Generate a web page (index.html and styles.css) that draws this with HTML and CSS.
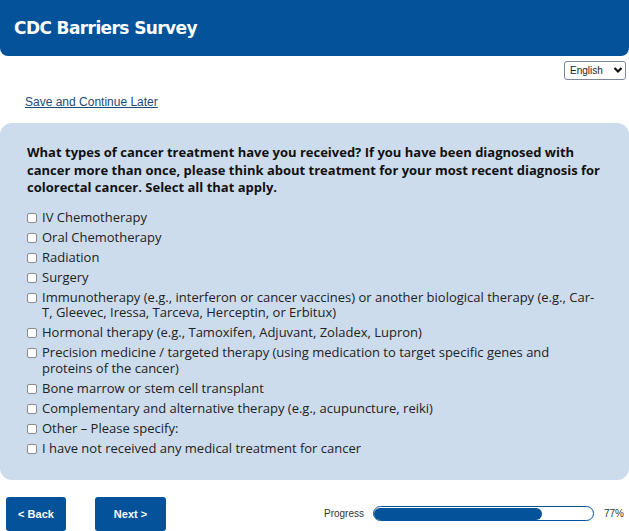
FILE: index.html
```html
<!DOCTYPE html>
<html lang="en">

<head>
    <meta charset="UTF-8">
    <meta name="viewport" content="width=device-width, initial-scale=1.0">
    <title>CDC Barriers Survey</title>
    <link rel="stylesheet" href="styles.css">
</head>

<body>

    <header class="top-bar">
        <h1>CDC Barriers Survey</h1>
    </header>

    <div class="lang-row">
        <div class="lang-select">
            <select>
                <option>English</option>
                <option>Español</option>
            </select>
            <svg class="chevron" width="10" height="8" viewBox="0 0 10 8">
                <path d="M1.5 2 L5 5.5 L8.5 2" fill="none" stroke="#111" stroke-width="2.2"/>
            </svg>
        </div>
    </div>

    <a class="save-link" href="#">Save and Continue Later</a>

    <div class="question-panel">
        <p class="question">What types of cancer treatment have you received? If you have been diagnosed with cancer more than once, please think about treatment for your most recent diagnosis for colorectal cancer. Select all that apply.</p>

        <div class="options">
            <label class="option"><input type="checkbox"><span>IV Chemotherapy</span></label>
            <label class="option"><input type="checkbox"><span>Oral Chemotherapy</span></label>
            <label class="option"><input type="checkbox"><span>Radiation</span></label>
            <label class="option"><input type="checkbox"><span>Surgery</span></label>
            <label class="option"><input type="checkbox"><span>Immunotherapy (e.g., interferon or cancer vaccines) or another biological therapy (e.g., Car-T, Gleevec, Iressa, Tarceva, Herceptin, or Erbitux)</span></label>
            <label class="option"><input type="checkbox"><span>Hormonal therapy (e.g., Tamoxifen, Adjuvant, Zoladex, Lupron)</span></label>
            <label class="option"><input type="checkbox"><span>Precision medicine / targeted therapy (using medication to target specific genes and proteins of the cancer)</span></label>
            <label class="option"><input type="checkbox"><span>Bone marrow or stem cell transplant</span></label>
            <label class="option"><input type="checkbox"><span>Complementary and alternative therapy (e.g., acupuncture, reiki)</span></label>
            <label class="option"><input type="checkbox"><span>Other – Please specify:</span></label>
            <label class="option"><input type="checkbox"><span>I have not received any medical treatment for cancer</span></label>
        </div>
    </div>

    <div class="footer">
        <button class="nav-btn back-btn">&lt; Back</button>
        <button class="nav-btn next-btn">Next &gt;</button>

        <div class="progress">
            <span class="progress-label">Progress</span>
            <div class="progress-track">
                <div class="progress-fill" style="width: 77%;"></div>
            </div>
            <span class="progress-value">77%</span>
        </div>
    </div>

</body>

</html>
```

FILE: styles.css
```css
body {
    margin: 0;
    font-family: "Liberation Sans", Arial, sans-serif;
    background: #ffffff;
    color: #111;
}

.top-bar {
    background: #03529a;
    height: 56px;
    border-radius: 0 0 8px 8px;
    display: flex;
    align-items: center;
}

.top-bar h1 {
    margin: 0;
    padding-left: 14px;
    color: #ffffff;
    font-family: "DejaVu Sans", Verdana, sans-serif;
    font-size: 17px;
    font-weight: bold;
    letter-spacing: -0.6px;
}

.lang-row {
    display: flex;
    justify-content: flex-end;
    padding: 4px 3px 0 0;
}

.lang-select {
    position: relative;
}

.lang-select select {
    appearance: none;
    -webkit-appearance: none;
    width: 62px;
    height: 19px;
    padding: 0 0 0 5px;
    border: 1px solid #7a8799;
    border-radius: 3px;
    background: #ffffff;
    font-family: "Liberation Sans", Arial, sans-serif;
    font-size: 10px;
    color: #222;
}

.chevron {
    position: absolute;
    right: 3px;
    top: 6px;
    pointer-events: none;
}

.save-link {
    display: inline-block;
    margin: 15px 0 0 25px;
    font-size: 12px;
    color: #1b4a7a;
}

.question-panel {
    margin-top: 13px;
    background: #cddced;
    border-radius: 12px;
    padding: 21px 27px 21px 27px;
}

.question {
    margin: 0 0 11px 0;
    font-family: "Open Sans", "Noto Sans", sans-serif;
    font-size: 13px;
    font-weight: bold;
    line-height: 17.5px;
    color: #111;
}

.options {
    display: flex;
    flex-direction: column;
}

.option {
    display: flex;
    align-items: flex-start;
    padding: 2.25px 0;
    font-family: "Open Sans", "Noto Sans", sans-serif;
    font-size: 13px;
    line-height: 15.5px;
    color: #222;
}

.option input {
    appearance: none;
    -webkit-appearance: none;
    flex-shrink: 0;
    width: 10px;
    height: 10px;
    margin: 3px 5px 0 0;
    border: 1px solid #8a8a8a;
    border-radius: 2px;
    background: #ffffff;
}

.footer {
    display: flex;
    align-items: center;
    padding: 17px 0 0 6px;
}

.nav-btn {
    cursor: pointer;
    border: none;
    border-radius: 3px;
    background: #03529a;
    color: #ffffff;
    font-family: "Liberation Sans", Arial, sans-serif;
    font-size: 11px;
    font-weight: bold;
    height: 34px;
}

.back-btn {
    width: 60px;
}

.next-btn {
    width: 71px;
    margin-left: 29px;
}

.progress {
    display: flex;
    align-items: center;
    margin-left: auto;
    margin-right: 5px;
    font-size: 10px;
    color: #333;
}

.progress-track {
    width: 218px;
    height: 12px;
    margin: 0 10px 0 9px;
    border: 1.5px solid #03529a;
    border-radius: 8px;
    background: #ffffff;
    padding: 0.5px;
}

.progress-fill {
    height: 100%;
    background: #03529a;
    border-radius: 7px;
}
```
